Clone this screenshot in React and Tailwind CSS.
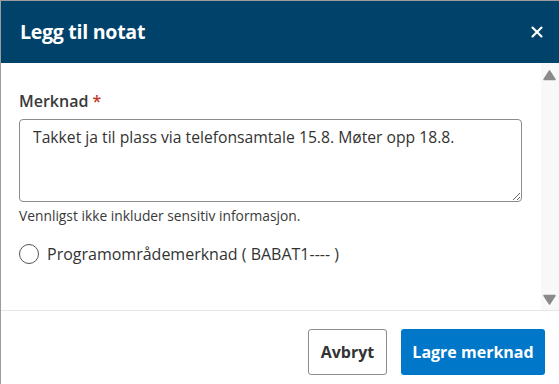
import { X } from 'lucide-react'

function ScrollArrow({ down }) {
  return (
    <svg width="13" height="11" viewBox="0 0 13 11" className="block">
      <path
        d={down ? 'M1 1.5 L12 1.5 L6.5 10 Z' : 'M1 9.5 L12 9.5 L6.5 1 Z'}
        fill="#8a8a8a"
        stroke="#8a8a8a"
        strokeWidth="1.5"
        strokeLinejoin="round"
      />
    </svg>
  )
}

export default function App() {
  return (
    <div className="w-[559px] h-[384px] bg-white border-l border-t border-[#9c9c9c] flex flex-col overflow-hidden font-['Open_Sans',sans-serif] text-[#333]">
      {/* ── Header ── */}
      <div className="h-[62px] shrink-0 bg-[#01426a] flex items-center justify-between pl-[19px] pr-[13px]">
        <h2 className="text-[19.6px] font-bold text-white tracking-[-0.3px] leading-none pb-[1px]">Legg til notat</h2>
        <X size={18} strokeWidth={2.8} className="text-white" />
      </div>

      {/* ── Body ── */}
      <div className="h-[247px] shrink-0 flex">
        <div className="flex-1 pl-[18px] pr-[19px] pt-[26px]">
          <label className="block text-[16px] font-semibold leading-[24px] mb-[6px] text-[#3a3a3a]">
            Merknad <span className="text-[#c0392b]">*</span>
          </label>
          <textarea
            defaultValue="Takket ja til plass via telefonsamtale 15.8. Møter opp 18.8."
            className="block w-full h-[83px] border border-[#8c8c8c] rounded-[4px] pl-[13px] pr-3 pt-[5px] text-[15.7px] leading-[24px] text-[#333] resize-y outline-none"
          />
          <p className="mt-[5px] text-[13.8px] leading-[18px] text-[#3a3a3a]">Vennligst ikke inkluder sensitiv informasjon.</p>
          <div className="mt-[17px] flex items-center gap-[8px]">
            <span className="w-[20px] h-[20px] rounded-full border-[1.5px] border-[#555] shrink-0" />
            <span className="text-[16px] leading-[24px]">Programområdemerknad ( BABAT1---- )</span>
          </div>
        </div>
        <div className="w-[18px] shrink-0 bg-[#f8f8f8] flex flex-col items-center justify-between pt-[7px] pb-[5px] pr-[1px]">
          <ScrollArrow />
          <ScrollArrow down />
        </div>
      </div>

      {/* ── Footer ── */}
      <div className="flex-1 border-t border-[#e6e6e6] flex justify-end items-start gap-[14px] pt-[18px] pr-[14px]">
        <button className="w-[79px] h-[46px] border border-[#8c8c8c] rounded-[3px] bg-white text-[16px] font-bold text-[#333]">
          Avbryt
        </button>
        <button className="w-[144px] h-[46px] rounded-[3px] bg-[#0077c8] text-[16px] font-bold text-white">
          Lagre merknad
        </button>
      </div>
    </div>
  )
}
